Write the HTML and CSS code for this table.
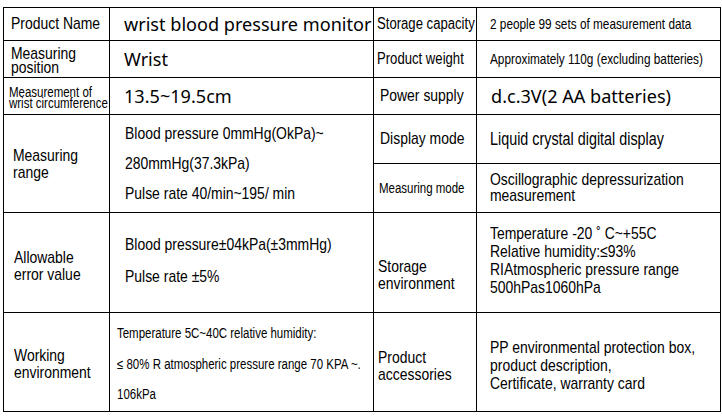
FILE: index.html
```html
<!DOCTYPE html>
<html>
<head>
<meta charset="utf-8">
<link rel="stylesheet" href="styles.css">
</head>
<body>
<table class="spec">
  <colgroup>
    <col class="c1"><col class="c2"><col class="c3"><col class="c4">
  </colgroup>
  <tr class="r1">
    <th class="lab-name"><span class="nar">Product Name</span></th>
    <td class="val-noto">wrist blood pressure monitor</td>
    <th class="lab-cap"><span class="nar">Storage capacity</span></th>
    <td class="val-data"><span class="nar">2 people 99 sets of measurement data</span></td>
  </tr>
  <tr class="r2">
    <th class="lab-pos"><span class="nar">Measuring<br>position</span></th>
    <td class="val-noto">Wrist</td>
    <th class="lab-cap"><span class="nar">Product weight</span></th>
    <td class="val-data"><span class="nar">Approximately 110g (excluding batteries)</span></td>
  </tr>
  <tr class="r3">
    <th class="lab-wrist"><span class="nar">Measurement of<br>wrist circumference</span></th>
    <td class="val-noto">13.5~19.5cm</td>
    <th class="lab-reg"><span class="nar">Power supply</span></th>
    <td class="val-noto">d.c.3V(2 AA batteries)</td>
  </tr>
  <tr class="r4">
    <th class="lab-big lab-range" rowspan="2"><span class="nar">Measuring<br>range</span></th>
    <td class="val-spaced" rowspan="2"><span class="nar">Blood pressure 0mmHg(OkPa)~<br>280mmHg(37.3kPa)<br>Pulse rate 40/min~195/ min</span></td>
    <th class="lab-reg"><span class="nar">Display mode</span></th>
    <td class="val-reg"><span class="nar">Liquid crystal digital display</span></td>
  </tr>
  <tr class="r5">
    <th class="lab-mode"><span class="nar">Measuring mode</span></th>
    <td class="val-tight val-osc"><span class="nar">Oscillographic depressurization<br>measurement</span></td>
  </tr>
  <tr class="r6">
    <th class="lab-big lab-err"><span class="nar">Allowable<br>error value</span></th>
    <td class="val-error"><span class="nar">Blood pressure±04kPa(±3mmHg)<br>Pulse rate ±5%</span></td>
    <th class="lab-big lab-low"><span class="nar">Storage<br>environment</span></th>
    <td class="val-tight val-env"><span class="nar">Temperature -20 ˚ C~+55C<br>Relative humidity:≤93%<br>RIAtmospheric pressure range<br>500hPas1060hPa</span></td>
  </tr>
  <tr class="r7">
    <th class="lab-big lab-work"><span class="nar">Working<br>environment</span></th>
    <td class="val-work"><span class="nar">Temperature 5C~40C relative humidity:<br>≤ 80% R atmospheric pressure range 70 KPA ~.<br>106kPa</span></td>
    <th class="lab-big lab-acc"><span class="nar">Product<br>accessories</span></th>
    <td class="val-tight val-acc"><span class="nar">PP environmental protection box,<br>product description,<br>Certificate, warranty card</span></td>
  </tr>
</table>
</body>
</html>
```

FILE: styles.css
```css
html, body {
  margin: 0;
  background: #fff;
}
body {
  padding: 7px 3px 0 3px;
  color: #000;
  font-family: "Liberation Sans", Arial, sans-serif;
}
.spec {
  border-collapse: collapse;
  table-layout: fixed;
  width: 717px;
}
.c1 { width: 106px; }
.c2 { width: 264px; }
.c3 { width: 103px; }
.c4 { width: 244px; }
.spec th,
.spec td {
  border: 1px solid #000;
  padding: 0;
  text-align: left;
  vertical-align: middle;
  font-weight: normal;
  white-space: nowrap;
  overflow: visible;
}
/* condensed face: Arial Narrow proportions */
.nar {
  display: inline-block;
  transform: scaleX(0.82);
  transform-origin: 0 50%;
}
.r1 { height: 33px; }
.r2 { height: 37px; }
.r3 { height: 37px; }
.r4 { height: 49px; }
.r5 { height: 49px; }
.r6 { height: 100px; }
.r7 { height: 99px; }

/* labels */
.spec .lab-name { font-size: 17px; padding-left: 7px; }
.spec .lab-pos { font-size: 17px; line-height: 14px; padding-left: 7px; padding-top: 3px; }
.spec .lab-wrist { font-size: 14px; line-height: 11px; padding-left: 5px; padding-top: 3px; }
.spec .lab-cap { font-size: 16px; padding-left: 3px; }
.spec .lab-reg { font-size: 17px; padding-left: 6px; }
.spec .lab-mode { font-size: 14px; padding-left: 5px; }
.spec .lab-big { font-size: 17px; line-height: 17px; padding-left: 10px; }
.spec .lab-range { padding-left: 9px; }
.spec .lab-err { padding-top: 6px; }
.spec .lab-work { padding-top: 4px; }
.spec .lab-low { padding-left: 4px; padding-top: 24px; }
.spec .lab-acc { padding-left: 4px; padding-top: 8px; }

/* values */
.spec .val-noto {
  font-family: "Noto Sans", "Open Sans", sans-serif;
  font-size: 18.1px;
  padding-left: 14px;
}
.spec .val-data { font-size: 14.4px; padding-left: 13px; }
.spec .val-reg { font-size: 17.5px; padding-left: 13px; }
.spec .val-spaced { font-size: 17px; line-height: 30px; padding-left: 15px; }
.spec .val-tight { font-size: 17px; line-height: 18px; padding-left: 13px; }
.spec .val-osc { line-height: 16px; }
.spec .val-env { padding-bottom: 4px; }
.spec .val-error { font-size: 17px; line-height: 32px; padding-left: 15px; padding-bottom: 3px; }
.spec .val-work { font-size: 14px; line-height: 30.5px; padding-left: 7px; padding-top: 4px; }
.spec .val-acc { padding-top: 8px; }
```
